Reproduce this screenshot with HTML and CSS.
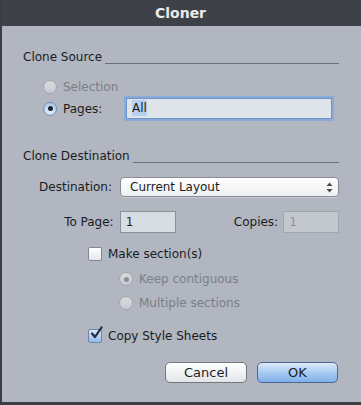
FILE: index.html
```html
<!DOCTYPE html>
<html lang="en">
<head>
    <meta charset="UTF-8">
    <title>Cloner</title>
    <link rel="stylesheet" href="styles.css">
</head>
<body>
    <div class="window">
        <header class="titlebar">Cloner</header>

        <main class="content">
            <div class="group-head">
                <span>Clone Source</span>
                <span class="rule"></span>
            </div>

            <div class="row row-selection">
                <span class="radio disabled"></span>
                <span class="label muted">Selection</span>
            </div>
            <div class="row row-pages">
                <span class="radio on"></span>
                <span class="label pages-label">Pages:</span>
                <div class="field field-pages"><span class="sel">All</span></div>
            </div>

            <div class="group-head group-dest">
                <span>Clone Destination</span>
                <span class="rule"></span>
            </div>

            <div class="row row-destination">
                <span class="form-label">Destination:</span>
                <div class="popup">
                    <span>Current Layout</span>
                    <svg class="arrows" width="7" height="11" viewBox="0 0 7 11"><path d="M0.5 4 L3.5 0.5 L6.5 4 Z M0.5 7 L3.5 10.5 L6.5 7 Z" fill="#4a4c50"/></svg>
                </div>
            </div>

            <div class="row row-topage">
                <span class="form-label narrow">To Page:</span>
                <div class="field small">1</div>
                <span class="form-label copies">Copies:</span>
                <div class="field small disabled">1</div>
            </div>

            <div class="row row-sections">
                <span class="check"></span>
                <span class="label">Make section(s)</span>
            </div>
            <div class="row row-keep">
                <span class="radio disabled dot"></span>
                <span class="label muted">Keep contiguous</span>
            </div>
            <div class="row row-multiple">
                <span class="radio disabled"></span>
                <span class="label muted">Multiple sections</span>
            </div>

            <div class="row row-copy">
                <span class="check on">
                    <svg width="15" height="15" viewBox="0 0 15 15"><path d="M3 7.5 L6 11 L12.5 1.5" fill="none" stroke="#1d2a44" stroke-width="2.2" stroke-linecap="round" stroke-linejoin="round"/></svg>
                </span>
                <span class="label">Copy Style Sheets</span>
            </div>

            <div class="buttons">
                <button class="btn">Cancel</button>
                <button class="btn default">OK</button>
            </div>
        </main>
    </div>
</body>
</html>
```

FILE: styles.css
```css
* {
    margin: 0;
    padding: 0;
    box-sizing: border-box;
}

body {
    font-family: 'DejaVu Sans', 'Liberation Sans', sans-serif;
    font-size: 12px;
    color: #1b1c1f;
    background-color: #3b3e44;
    width: 361px;
    height: 405px;
    overflow: hidden;
}

.window {
    width: 361px;
    height: 405px;
    display: flex;
    flex-direction: column;
    border-left: 2px solid #3b3e44;
    border-bottom: 3px solid #3b3e44;
}

.titlebar {
    height: 26px;
    background-color: #3e4147;
    color: #ebebeb;
    font-weight: bold;
    font-size: 14px;
    text-align: center;
    line-height: 27px;
    padding-right: 2px;
}

.content {
    flex: 1;
    background-color: #b1b6c0;
    padding: 21px 22px 0 21px;
    display: flex;
    flex-direction: column;
}

.group-head {
    height: 20px;
    display: flex;
    align-items: center;
    gap: 3px;
}

.group-head .rule {
    flex: 1;
    height: 7px;
    border-bottom: 1px solid #6c7079;
    align-self: flex-end;
    margin-bottom: 3px;
}

.group-dest {
    margin-top: 26px;
}

.row {
    display: flex;
    align-items: center;
    height: 18px;
}

.row-selection { margin-top: 11px; padding-left: 20px; }
.row-pages { margin-top: 1px; height: 23px; padding-left: 20px; }
.row-destination { margin-top: 10px; height: 22px; }
.row-topage { margin-top: 13px; height: 22px; }
.row-sections { margin-top: 12px; padding-left: 65px; }
.row-keep { margin-top: 7px; padding-left: 96px; }
.row-multiple { margin-top: 6px; padding-left: 96px; }
.row-copy { margin-top: 15px; padding-left: 65px; }

.label {
    margin-left: 6px;
}

.muted {
    color: #7b7f88;
}

.pages-label {
    width: 63px;
}

.radio {
    width: 14px;
    height: 14px;
    border-radius: 50%;
    border: 1px solid #7b8fae;
    background: radial-gradient(circle at 50% 70%, #e6f0fb, #9fc0e8);
    display: flex;
    align-items: center;
    justify-content: center;
}

.radio.on::after,
.radio.dot::after {
    content: "";
    width: 5px;
    height: 5px;
    border-radius: 50%;
    background-color: #1b2233;
}

.radio.disabled {
    border-color: #a3a7ae;
    background: linear-gradient(#d8dbe0, #c7cad0);
}

.radio.dot::after {
    background-color: #8d9097;
}

.field {
    height: 21px;
    border: 1px solid #8b8f97;
    background-color: #d8dce3;
    padding: 0 5px;
    line-height: 19px;
}

.field-pages {
    width: 206px;
    border-color: #6d95cc;
    box-shadow: 0 0 0 2px rgba(120, 166, 222, 0.7);
    background-color: #dfe3ea;
}

.field-pages .sel {
    background-color: #b9d0ee;
    padding: 1px 0;
}

.form-label {
    width: 89px;
    text-align: right;
    margin-right: 8px;
}

.form-label.narrow {
    width: 91px;
    margin-right: 6px;
}

.form-label.copies {
    width: 103px;
    margin-right: 5px;
}

.field.small {
    width: 56px;
    height: 22px;
    line-height: 20px;
    color: #2a1e1a;
}

.field.disabled {
    background-color: #c3c7ce;
    border-color: #a2a6ad;
    color: #8f939a;
}

.popup {
    flex: 1;
    height: 20px;
    border: 1px solid #878b93;
    border-radius: 4px;
    background: linear-gradient(#ffffff, #eeeff1);
    display: flex;
    align-items: center;
    justify-content: space-between;
    padding: 0 5px 0 9px;
    box-shadow: 0 1px 0 rgba(255, 255, 255, 0.3);
}

.check {
    width: 14px;
    height: 14px;
    border: 1px solid #85898f;
    border-radius: 2px;
    background: linear-gradient(#ffffff, #e4e6ea);
    position: relative;
}

.check.on {
    border-color: #6f86ab;
    background: linear-gradient(#d9e7f8, #94b9e6);
}

.check svg {
    position: absolute;
    left: 0;
    top: -4px;
}

.buttons {
    margin-top: 17px;
    display: flex;
    justify-content: flex-end;
    gap: 10px;
    padding-right: 1px;
}

.btn {
    font-family: inherit;
    font-size: 13px;
    width: 82px;
    height: 21px;
    border: 1px solid #74777e;
    border-radius: 5px;
    background: linear-gradient(#ffffff, #f1f2f4 50%, #e2e4e8);
    color: #1b1c1f;
}

.btn.default {
    width: 81px;
    border-color: #4f6690;
    background: linear-gradient(#dbe9fa, #a9cbf2 50%, #7fb0ea);
}
```
